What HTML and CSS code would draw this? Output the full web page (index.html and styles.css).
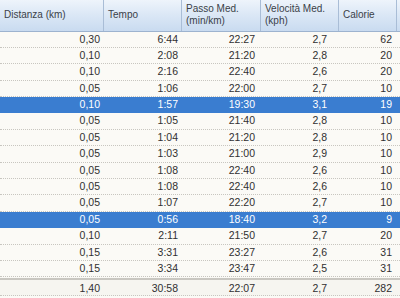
FILE: index.html
```html
<!DOCTYPE html>
<html>
<head>
<meta charset="utf-8">
<link rel="stylesheet" href="styles.css">
</head>
<body>
<div class="grid">
  <div class="row head">
    <div class="h">Distanza (km)</div>
    <div class="h">Tempo</div>
    <div class="h">Passo Med.<br>(min/km)</div>
    <div class="h">Velocità Med.<br>(kph)</div>
    <div class="h">Calorie</div>
    <div class="h last"></div>
  </div>
  <div class="row"><div class="c c1">0,30</div><div class="c c2">6:44</div><div class="c c3">22:27</div><div class="c c4">2,7</div><div class="c c5">62</div><div class="c"></div></div>
  <div class="row"><div class="c c1">0,10</div><div class="c c2">2:08</div><div class="c c3">21:20</div><div class="c c4">2,8</div><div class="c c5">20</div><div class="c"></div></div>
  <div class="row"><div class="c c1">0,10</div><div class="c c2">2:16</div><div class="c c3">22:40</div><div class="c c4">2,6</div><div class="c c5">20</div><div class="c"></div></div>
  <div class="row"><div class="c c1">0,05</div><div class="c c2">1:06</div><div class="c c3">22:00</div><div class="c c4">2,7</div><div class="c c5">10</div><div class="c"></div></div>
  <div class="row sel"><div class="c c1">0,10</div><div class="c c2">1:57</div><div class="c c3">19:30</div><div class="c c4">3,1</div><div class="c c5">19</div><div class="c"></div></div>
  <div class="row"><div class="c c1">0,05</div><div class="c c2">1:05</div><div class="c c3">21:40</div><div class="c c4">2,8</div><div class="c c5">10</div><div class="c"></div></div>
  <div class="row"><div class="c c1">0,05</div><div class="c c2">1:04</div><div class="c c3">21:20</div><div class="c c4">2,8</div><div class="c c5">10</div><div class="c"></div></div>
  <div class="row"><div class="c c1">0,05</div><div class="c c2">1:03</div><div class="c c3">21:00</div><div class="c c4">2,9</div><div class="c c5">10</div><div class="c"></div></div>
  <div class="row"><div class="c c1">0,05</div><div class="c c2">1:08</div><div class="c c3">22:40</div><div class="c c4">2,6</div><div class="c c5">10</div><div class="c"></div></div>
  <div class="row"><div class="c c1">0,05</div><div class="c c2">1:08</div><div class="c c3">22:40</div><div class="c c4">2,6</div><div class="c c5">10</div><div class="c"></div></div>
  <div class="row"><div class="c c1">0,05</div><div class="c c2">1:07</div><div class="c c3">22:20</div><div class="c c4">2,7</div><div class="c c5">10</div><div class="c"></div></div>
  <div class="row sel"><div class="c c1">0,05</div><div class="c c2">0:56</div><div class="c c3">18:40</div><div class="c c4">3,2</div><div class="c c5">9</div><div class="c"></div></div>
  <div class="row"><div class="c c1">0,10</div><div class="c c2">2:11</div><div class="c c3">21:50</div><div class="c c4">2,7</div><div class="c c5">20</div><div class="c"></div></div>
  <div class="row"><div class="c c1">0,15</div><div class="c c2">3:31</div><div class="c c3">23:27</div><div class="c c4">2,6</div><div class="c c5">31</div><div class="c"></div></div>
  <div class="row"><div class="c c1">0,15</div><div class="c c2">3:34</div><div class="c c3">23:47</div><div class="c c4">2,5</div><div class="c c5">31</div><div class="c"></div></div>
  <div class="row total"><div class="c c1">1,40</div><div class="c c2">30:58</div><div class="c c3">22:07</div><div class="c c4">2,7</div><div class="c c5">282</div><div class="c"></div></div>
</div>
</body>
</html>
```
FILE: styles.css
```css
html, body {
  margin: 0;
  padding: 0;
  background: #fbfaf6;
}
body {
  width: 400px;
  height: 298px;
  overflow: hidden;
  font-family: "Liberation Sans", Arial, sans-serif;
  font-size: 10.5px;
  color: #303030;
}
.grid {
  display: flex;
  flex-direction: column;
}
.row {
  display: grid;
  grid-template-columns: 104px 78px 79px 78px 58px 1fr;
  height: 16.4px;
  box-sizing: border-box;
  border-bottom: 1px dotted #c8c6c0;
}
.head {
  height: 31.5px;
  border-bottom: 1px solid #9db3cf;
  background: linear-gradient(#eef4fb 0%, #dce8f6 45%, #c9dbf0 100%);
  color: #3a3f48;
}
.h {
  display: flex;
  align-items: center;
  padding-left: 4px;
  line-height: 12px;
  font-size: 10px;
  border-right: 1px solid #a9bdd6;
}
.h.last {
  border-right: none;
}
.c {
  text-align: right;
  line-height: 15px;
  white-space: nowrap;
}
.c1 { padding-right: 4px; }
.c2 { padding-right: 4px; }
.c3 { padding-right: 6px; }
.c4 { padding-right: 12px; }
.c5 { padding-right: 5px; }
.sel {
  background: #3a7dd0;
  color: #ffffff;
  border-bottom-color: #3a7dd0;
}
.total {
  margin-top: 1px;
  height: 18px;
  border-top: 2px solid #c9c7c1;
  border-bottom: 1px dotted #c8c6c0;
  background: #f6f5f0;
}
.total .c {
  line-height: 16px;
}
```
